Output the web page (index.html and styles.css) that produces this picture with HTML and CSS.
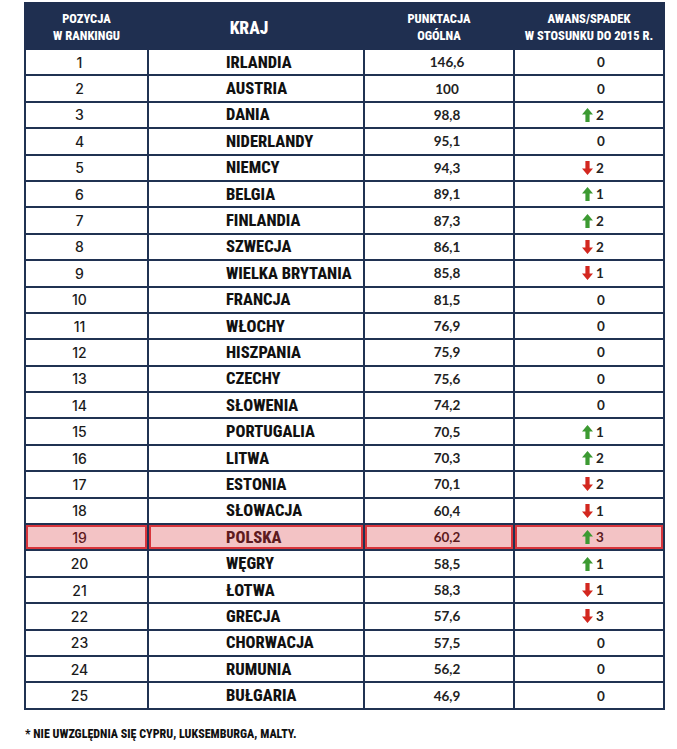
FILE: index.html
```html
<!DOCTYPE html>
<html lang="pl">
<head>
<meta charset="utf-8">
<title>Ranking</title>
<link rel="stylesheet" href="styles.css">
</head>
<body>
<main class="page">
<table class="rank">
<colgroup><col class="w-pos"><col class="w-country"><col class="w-score"><col class="w-chg"></colgroup>
<thead>
<tr><th class="h-small">POZYCJA<br>W RANKINGU</th><th class="h-big">KRAJ</th><th class="h-small">PUNKTACJA<br>OGÓLNA</th><th class="h-small">AWANS/SPADEK<br>W STOSUNKU DO 2015 R.</th></tr>
</thead>
<tbody>
<tr><td class="pos">1</td><td class="country">IRLANDIA</td><td class="score">146,6</td><td class="chg"><span class="num">0</span></td></tr>
<tr><td class="pos">2</td><td class="country">AUSTRIA</td><td class="score">100</td><td class="chg"><span class="num">0</span></td></tr>
<tr><td class="pos">3</td><td class="country">DANIA</td><td class="score">98,8</td><td class="chg"><svg class="arr up" viewBox="0 0 11 14"><path d="M5.5 0L11 6.5H7.6V14H3.4V6.5H0Z"/></svg><span class="num">2</span></td></tr>
<tr><td class="pos">4</td><td class="country">NIDERLANDY</td><td class="score">95,1</td><td class="chg"><span class="num">0</span></td></tr>
<tr><td class="pos">5</td><td class="country">NIEMCY</td><td class="score">94,3</td><td class="chg"><svg class="arr down" viewBox="0 0 11 14"><path d="M5.5 14L11 7.5H7.6V0H3.4V7.5H0Z"/></svg><span class="num">2</span></td></tr>
<tr><td class="pos">6</td><td class="country">BELGIA</td><td class="score">89,1</td><td class="chg"><svg class="arr up" viewBox="0 0 11 14"><path d="M5.5 0L11 6.5H7.6V14H3.4V6.5H0Z"/></svg><span class="num">1</span></td></tr>
<tr><td class="pos">7</td><td class="country">FINLANDIA</td><td class="score">87,3</td><td class="chg"><svg class="arr up" viewBox="0 0 11 14"><path d="M5.5 0L11 6.5H7.6V14H3.4V6.5H0Z"/></svg><span class="num">2</span></td></tr>
<tr><td class="pos">8</td><td class="country">SZWECJA</td><td class="score">86,1</td><td class="chg"><svg class="arr down" viewBox="0 0 11 14"><path d="M5.5 14L11 7.5H7.6V0H3.4V7.5H0Z"/></svg><span class="num">2</span></td></tr>
<tr><td class="pos">9</td><td class="country">WIELKA BRYTANIA</td><td class="score">85,8</td><td class="chg"><svg class="arr down" viewBox="0 0 11 14"><path d="M5.5 14L11 7.5H7.6V0H3.4V7.5H0Z"/></svg><span class="num">1</span></td></tr>
<tr><td class="pos">10</td><td class="country">FRANCJA</td><td class="score">81,5</td><td class="chg"><span class="num">0</span></td></tr>
<tr><td class="pos">11</td><td class="country">WŁOCHY</td><td class="score">76,9</td><td class="chg"><span class="num">0</span></td></tr>
<tr><td class="pos">12</td><td class="country">HISZPANIA</td><td class="score">75,9</td><td class="chg"><span class="num">0</span></td></tr>
<tr><td class="pos">13</td><td class="country">CZECHY</td><td class="score">75,6</td><td class="chg"><span class="num">0</span></td></tr>
<tr><td class="pos">14</td><td class="country">SŁOWENIA</td><td class="score">74,2</td><td class="chg"><span class="num">0</span></td></tr>
<tr><td class="pos">15</td><td class="country">PORTUGALIA</td><td class="score">70,5</td><td class="chg"><svg class="arr up" viewBox="0 0 11 14"><path d="M5.5 0L11 6.5H7.6V14H3.4V6.5H0Z"/></svg><span class="num">1</span></td></tr>
<tr><td class="pos">16</td><td class="country">LITWA</td><td class="score">70,3</td><td class="chg"><svg class="arr up" viewBox="0 0 11 14"><path d="M5.5 0L11 6.5H7.6V14H3.4V6.5H0Z"/></svg><span class="num">2</span></td></tr>
<tr><td class="pos">17</td><td class="country">ESTONIA</td><td class="score">70,1</td><td class="chg"><svg class="arr down" viewBox="0 0 11 14"><path d="M5.5 14L11 7.5H7.6V0H3.4V7.5H0Z"/></svg><span class="num">2</span></td></tr>
<tr><td class="pos">18</td><td class="country">SŁOWACJA</td><td class="score">60,4</td><td class="chg"><svg class="arr down" viewBox="0 0 11 14"><path d="M5.5 14L11 7.5H7.6V0H3.4V7.5H0Z"/></svg><span class="num">1</span></td></tr>
<tr class="hl"><td class="pos">19</td><td class="country">POLSKA</td><td class="score">60,2</td><td class="chg"><svg class="arr up" viewBox="0 0 11 14"><path d="M5.5 0L11 6.5H7.6V14H3.4V6.5H0Z"/></svg><span class="num">3</span></td></tr>
<tr><td class="pos">20</td><td class="country">WĘGRY</td><td class="score">58,5</td><td class="chg"><svg class="arr up" viewBox="0 0 11 14"><path d="M5.5 0L11 6.5H7.6V14H3.4V6.5H0Z"/></svg><span class="num">1</span></td></tr>
<tr><td class="pos">21</td><td class="country">ŁOTWA</td><td class="score">58,3</td><td class="chg"><svg class="arr down" viewBox="0 0 11 14"><path d="M5.5 14L11 7.5H7.6V0H3.4V7.5H0Z"/></svg><span class="num">1</span></td></tr>
<tr><td class="pos">22</td><td class="country">GRECJA</td><td class="score">57,6</td><td class="chg"><svg class="arr down" viewBox="0 0 11 14"><path d="M5.5 14L11 7.5H7.6V0H3.4V7.5H0Z"/></svg><span class="num">3</span></td></tr>
<tr><td class="pos">23</td><td class="country">CHORWACJA</td><td class="score">57,5</td><td class="chg"><span class="num">0</span></td></tr>
<tr><td class="pos">24</td><td class="country">RUMUNIA</td><td class="score">56,2</td><td class="chg"><span class="num">0</span></td></tr>
<tr><td class="pos">25</td><td class="country">BUŁGARIA</td><td class="score">46,9</td><td class="chg"><span class="num">0</span></td></tr>
</tbody>
</table>
<p class="note">* NIE UWZGLĘDNIA SIĘ CYPRU, LUKSEMBURGA, MALTY.</p>
</main>
</body>
</html>
```

FILE: styles.css
```css
html, body {
  margin: 0;
  padding: 0;
  background: #ffffff;
}

.page {
  padding: 2px 0 0 24px;
}

.rank {
  border-collapse: collapse;
  table-layout: fixed;
  width: 639px;
}

.w-pos { width: 123px; }
.w-country { width: 216px; }
.w-score { width: 150px; }
.w-chg { width: 150px; }

.rank th {
  background: #1f2f50;
  color: #ffffff;
  border: 2px solid #1f2f50;
  font-family: Roboto, "DejaVu Sans Condensed", sans-serif;
  font-stretch: 75%;
  font-weight: 800;
  text-align: center;
  padding: 0;
  height: 40px;
  white-space: nowrap;
}

.h-small {
  font-size: 12.5px;
  line-height: 17px;
  padding-top: 1px !important;
}

.h-big {
  font-size: 17.5px;
  padding: 4px 14px 0 0 !important;
}

.rank td {
  border: 2px solid #203252;
  height: 24.4px;
  padding: 0;
  color: #1b1b1b;
  white-space: nowrap;
}

.pos {
  font-family: Inter, "Open Sans", sans-serif;
  font-weight: 500;
  font-size: 14px;
  text-align: center;
  padding-right: 14px !important;
}

.country {
  font-family: Roboto, "DejaVu Sans Condensed", sans-serif;
  font-stretch: 75%;
  font-weight: 800;
  font-size: 16.5px;
  color: #111111 !important;
  padding-left: 77px !important;
}

.score {
  font-family: Lato, "Open Sans", sans-serif;
  font-weight: 700;
  font-size: 13.5px;
  text-align: center;
  padding-left: 16px !important;
  color: #222222 !important;
}

.chg {
  font-family: Lato, "Open Sans", sans-serif;
  font-weight: 700;
  font-size: 13.5px;
  padding-left: 82px !important;
  color: #222222 !important;
}

.arr {
  width: 11px;
  height: 14px;
  margin-left: -15px;
  margin-right: 3px;
  vertical-align: -2px;
}

.arr.up { fill: #3c9a32; }
.arr.down { fill: #d3271f; }

.hl td {
  background: #f3c3c5;
  box-shadow: inset 0 0 0 2px #d8353c;
  color: #5e1a20 !important;
}

.note {
  margin: 17px 0 0 1px;
  font-family: Roboto, "DejaVu Sans Condensed", sans-serif;
  font-stretch: 75%;
  font-weight: 800;
  font-size: 12px;
  color: #111111;
}
```
